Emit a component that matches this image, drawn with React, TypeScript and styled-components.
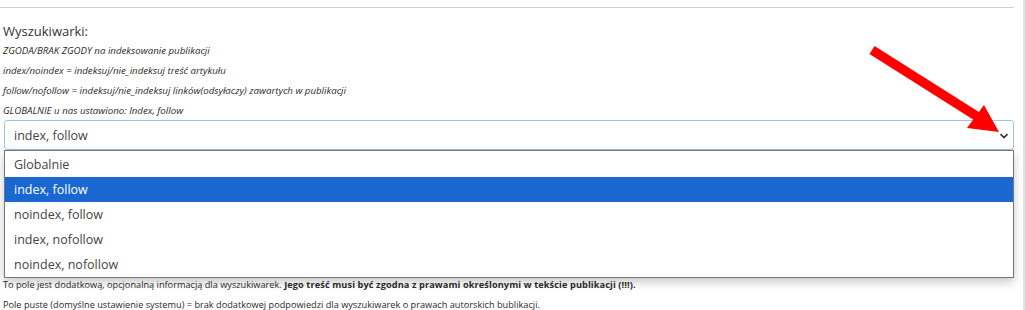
import React from 'react';
import styled, { createGlobalStyle } from 'styled-components';

const GlobalStyle = createGlobalStyle`
  html, body {
    margin: 0;
    padding: 0;
    background: #fff;
  }
  body {
    font-family: 'Open Sans', 'Noto Sans', sans-serif;
    color: #333;
  }
`;

const Page = styled.div`
  position: relative;
  width: 1025px;
  height: 310px;
  overflow: hidden;
  box-sizing: border-box;
  border-right: 2px solid #e2e2e2;
`;

const Content = styled.div`
  width: 1014px;
  padding-top: 7px;
`;

const Rule = styled.hr`
  margin: 0;
  border: 0;
  border-top: 1px solid #cfcfcf;
`;

const Heading = styled.div`
  margin: 13px 0 0 3px;
  font-size: 13px;
  line-height: 20px;
  color: #333;
`;

const Hint = styled.p<{ $italic?: boolean; $size?: number }>`
  margin: 0 0 0 3px;
  font-size: ${(p) => p.$size ?? 9.7}px;
  line-height: 20px;
  font-style: ${(p) => (p.$italic ? 'italic' : 'normal')};
  color: #2a2a2a;
  white-space: nowrap;

  strong {
    font-weight: 700;
    letter-spacing: 0.1px;
  }
`;

const Field = styled.div`
  position: relative;
  margin: -1px 0 0 4px;
`;

const SelectBox = styled.div`
  height: 30px;
  box-sizing: border-box;
  border: 1px solid #9cc4e4;
  border-radius: 3px;
  display: flex;
  align-items: center;
  justify-content: space-between;
  padding: 0 4px 0 9px;
  font-size: 12.5px;
  color: #444;
  background: #fff;
`;

const Chevron = styled.svg`
  width: 10px;
  height: 10px;
  margin-top: 2px;
`;

const OptionList = styled.ul`
  position: absolute;
  left: 0;
  right: 0;
  top: 30px;
  margin: 0;
  padding: 1px 0 0;
  list-style: none;
  background: #fff;
  border: 1px solid #767676;
  box-shadow: 0 4px 9px rgba(0, 0, 0, 0.22);
  z-index: 2;
`;

const Option = styled.li<{ $selected?: boolean }>`
  height: 25px;
  line-height: 25px;
  padding-left: 9px;
  font-size: 12.5px;
  color: ${(p) => (p.$selected ? '#fff' : '#444')};
  background: ${(p) => (p.$selected ? '#1a67d2' : 'transparent')};
`;

const Help = styled.div`
  margin-top: 125px;
  line-height: 21px;
`;

const Arrow = styled.svg`
  position: absolute;
  left: 860px;
  top: 40px;
  width: 150px;
  height: 100px;
  z-index: 3;
`;

const options = ['Globalnie', 'index, follow', 'noindex, follow', 'index, nofollow', 'noindex, nofollow'];

export default function App() {
  return (
    <Page>
      <GlobalStyle />
      <Content>
        <Rule />
        <Heading>Wyszukiwarki:</Heading>
        <Hint $italic>ZGODA/BRAK ZGODY na indeksowanie publikacji</Hint>
        <Hint $italic>index/noindex = indeksuj/nie_indeksuj treść artykułu</Hint>
        <Hint $italic>follow/nofollow = indeksuj/nie_indeksuj linków(odsyłaczy) zawartych w publikacji</Hint>
        <Hint $italic>GLOBALNIE u nas ustawiono: Index, follow</Hint>
        <Field>
          <SelectBox>
            <span>index, follow</span>
            <Chevron viewBox="0 0 10 10">
              <path d="M1.5 3.2 L5 6.6 L8.5 3.2" fill="none" stroke="#333" strokeWidth="1.7" />
            </Chevron>
          </SelectBox>
          <OptionList>
            {options.map((o) => (
              <Option key={o} $selected={o === 'index, follow'}>
                {o}
              </Option>
            ))}
          </OptionList>
        </Field>
        <Help>
          <Hint $size={9.2}>
            To pole jest dodatkową, opcjonalną informacją dla wyszukiwarek.{' '}
            <strong>Jego treść musi być zgodna z prawami określonymi w tekście publikacji (!!!).</strong>
          </Hint>
          <Hint $size={9.2}>
            Pole puste (domyślne ustawienie systemu) = brak dodatkowej podpowiedzi dla wyszukiwarek o prawach autorskich bublikacji.
          </Hint>
        </Help>
      </Content>
      <Arrow viewBox="0 0 150 100">
        <line x1="12" y1="10" x2="118" y2="77" stroke="#ff0000" strokeWidth="9.5" />
        <polygon points="107,88 124,65 139,92" fill="#ff0000" />
      </Arrow>
    </Page>
  );
}
